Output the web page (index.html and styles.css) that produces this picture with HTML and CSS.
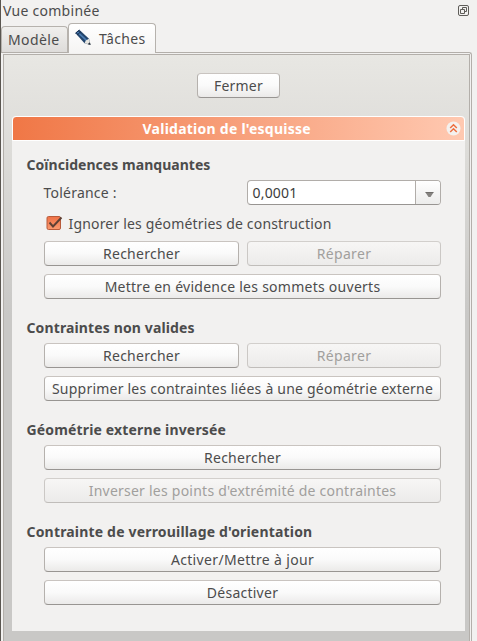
FILE: index.html
```html
<!DOCTYPE html>
<html lang="fr">
<head>
<meta charset="utf-8">
<title>Vue combinée</title>
<link rel="stylesheet" href="styles.css">
</head>
<body>
<div class="dock">
  <header class="dock-title">
    <span class="t-view">Vue combinée</span>
    <svg class="float-icon" width="11" height="11" viewBox="0 0 11 11" fill="none" stroke="#5f5d59"><rect x=".5" y=".5" width="10" height="10" rx="1.5"/><path d="M4.5 4V2.5H8.5V6.500H7M2.500 4.500H6.500V8.500H2.500Z"/></svg>
  </header>
  <nav class="tabs">
    <div class="tab"><span class="t-model">Modèle</span></div>
    <div class="tab active">
      <svg width="18" height="18" viewBox="0 0 18 18"><path d="M1.300 4 5.300 .7 15 9.800 16.300 15.500 10.500 14.300Z" fill="#23456d"/><path d="M3.300 2.800 13 11.800" stroke="#4c7db3" stroke-width="1.600"/><path d="M10.500 14.300 11.800 11.600 15 9.800 16.300 15.500Z" fill="#e9e7e1"/><path d="M13.500 15.200 15.900 13.200 16.700 16Z" fill="#28303a"/><path d="M1.500 4.300 5.300 1M3 6 7 2.700" stroke="#182f50"/></svg>
      <span class="t-tasks">Tâches</span>
    </div>
  </nav>
  <main class="pane">
    <div class="scroll">
      <button class="btn close"><span class="t-close">Fermer</span></button>
      <section class="panel">
        <div class="panel-title"><span class="t-title">Validation de l'esquisse</span>
          <svg class="collapse" width="15" height="15" viewBox="0 0 15 15"><circle cx="7.500" cy="7.500" r="7" fill="#f4f1ee"/><path d="M4.200 7 7.500 3.700 10.800 7M4.200 11 7.500 7.700 10.800 11" fill="none" stroke="#ee7041" stroke-width="1.500"/></svg>
        </div>
        <div class="content">
          <h2><span class="t-h1">Coïncidences manquantes</span></h2>
          <div class="rows">
            <div class="row tolerance"><label class="t-tol">Tolérance :</label>
              <div class="combo"><span class="value t-val">0,0001</span><span class="arrow"><svg width="9" height="6" viewBox="0 0 9 6"><path d="M.5.500H8.500L5.500 5H3.500Z" fill="#858380"/><path d="M.5.500H8.500" stroke="#6f6d6a"/></svg></span></div>
            </div>
            <label class="row check"><svg width="17" height="16" viewBox="0 0 17 16"><defs><linearGradient id="o" x2="0" y2="1"><stop stop-color="#ef7146"/><stop offset="1" stop-color="#fa9a70"/></linearGradient></defs><rect x="1" y=".5" width="13.500" height="13" rx="1.500" fill="url(#o)" stroke="#b85b3b"/><path d="M3.500 6.500 7 10.500 15.500 1.500" fill="none" stroke="#5e4034" stroke-width="1.900"/></svg><span class="t-ignore">Ignorer les géométries de construction</span></label>
            <div class="row"><button class="btn"><span class="t-search">Rechercher</span></button><button class="btn" disabled><span class="t-repair">Réparer</span></button></div>
            <button class="btn"><span class="t-open">Mettre en évidence les sommets ouverts</span></button>
          </div>
          <h2><span class="t-h2">Contraintes non valides</span></h2>
          <div class="rows">
            <div class="row"><button class="btn"><span class="t-search">Rechercher</span></button><button class="btn" disabled><span class="t-repair">Réparer</span></button></div>
            <button class="btn"><span class="t-remove">Supprimer les contraintes liées à une géométrie externe</span></button>
          </div>
          <h2><span class="t-h3">Géométrie externe inversée</span></h2>
          <div class="rows">
            <button class="btn"><span class="t-search">Rechercher</span></button>
            <button class="btn" disabled><span class="t-swap">Inverser les points d'extrémité de contraintes</span></button>
          </div>
          <h2><span class="t-h4">Contrainte de verrouillage d'orientation</span></h2>
          <div class="rows">
            <button class="btn"><span class="t-enable">Activer/Mettre à jour</span></button>
            <button class="btn"><span class="t-disable">Désactiver</span></button>
          </div>
        </div>
      </section>
    </div>
  </main>
</div>
</body>
</html>
```
FILE: styles.css
```css
* { box-sizing: border-box; }
body { margin: 0; background: #f2f1f0; color: #4c4c4c; font: 14px/20px "Noto Sans", sans-serif; overflow: hidden; }
span, label { white-space: nowrap; }
svg { display: block; flex: none; }
.dock { height: 641px; border-left: 1px solid #5a5650; display: flex; flex-direction: column; }
.dock-title { height: 23px; padding: 0 8px 2px 2px; display: flex; align-items: center; justify-content: space-between; }
.tabs { height: 29px; display: flex; align-items: flex-end; }
.tab { width: 67px; height: 26px; border: 1px solid #b6b2ad; border-bottom: 0; border-radius: 4px 4px 0 0; padding-left: 6px; display: flex; align-items: center; background: linear-gradient(#f0efed, #dedcda); }
.tab.active { width: 88px; height: 30px; margin-bottom: -1px; padding: 0 0 0 5px; gap: 7px; background: linear-gradient(#fff, #f5f4f3); z-index: 1; }
.tab.active svg { margin-top: -2px; }
.pane { width: 471px; flex: 1; border: solid #b3afaa; border-width: 1px 1px 0 0; border-radius: 0 3px 0 0; padding: 1px 1px 0 2px; }
.scroll { height: 100%; border: solid #b3afaa; border-width: 1px 1px 0; padding: 18px 4px 0 7px; display: flex; flex-direction: column; align-items: center; background: linear-gradient(#e8e7e3, #c9c8c6 260px); }
.btn { display: flex; align-items: center; justify-content: center; flex: 1; width: 100%; height: 25px; min-height: 25px; padding: 0 0 0 1px; border: 1px solid #b5b1ad; border-top-color: #c9c4c0; border-bottom-color: #989592; border-radius: 4px; background: linear-gradient(#fff, #fafafa 50%, #ebeae9); color: inherit; font: inherit; }
.btn:disabled { color: #a19f9d; border-color: #d2cfcc #cbc8c5 #c0bdba; background: linear-gradient(#f7f6f5, #ecebea); }
.btn.close { flex: none; width: 83px; }
.panel { width: 453px; height: 515px; margin-top: 18px; border-radius: 4px 4px 0 0; background: #f2f1f0; }
.panel-title { height: 25px; border: 1px solid #fff; border-radius: 4px 4px 0 0; display: flex; align-items: center; padding: 0 3px 0 130px; justify-content: space-between; color: #fff; font-weight: 700; background: linear-gradient(90deg, #f07746, #ffc9b1); }
.content { padding: 13px 24px 0 14px; }
h2 { height: 22px; margin: 0 0 4px; padding-left: 1px; font-size: 14px; line-height: 22px; font-weight: 700; }
.rows { display: flex; flex-direction: column; gap: 8px; padding-left: 18px; margin-bottom: 18px; }
.rows > .btn { flex: none; }
.row { display: grid; grid-template-columns: 195px 194px; gap: 8px; }
.combo { height: 25px; display: flex; border: 1px solid #b1ada9; border-bottom-color: #989592; border-radius: 4px; overflow: hidden; background: #fff; }
.value { flex: 1; padding-left: 5px; line-height: 24px; color: #3c3c3c; }
.arrow { width: 25px; border-left: 1px solid #b1ada9; display: flex; align-items: center; justify-content: center; padding: 4px 0 0 3px; background: linear-gradient(#fff, #ececeb); }
.tolerance label { line-height: 25px; }
.check { display: flex; gap: 6px; height: 20px; align-items: center; padding: 1px 0 0 2px; }

/* tracking per label */
.t-view { letter-spacing: .27px; }
.t-model { letter-spacing: .4px; }
.t-tasks { letter-spacing: .35px; }
.t-close { letter-spacing: .2px; }
.t-title { letter-spacing: .25px; }
.t-h1 { letter-spacing: .04px; }
.t-h2 { letter-spacing: .13px; }
.t-h3 { letter-spacing: .16px; }
.t-h4 { letter-spacing: .18px; }
.t-tol { letter-spacing: .22px; }
.t-val { letter-spacing: .2px; }
.t-ignore { letter-spacing: .17px; }
.t-search { letter-spacing: .25px; }
.t-repair { letter-spacing: .35px; }
.t-open { letter-spacing: .26px; }
.t-remove { letter-spacing: .22px; }
.t-swap { letter-spacing: .235px; }
.t-enable { letter-spacing: .34px; }
.t-disable { letter-spacing: .25px; }
```
